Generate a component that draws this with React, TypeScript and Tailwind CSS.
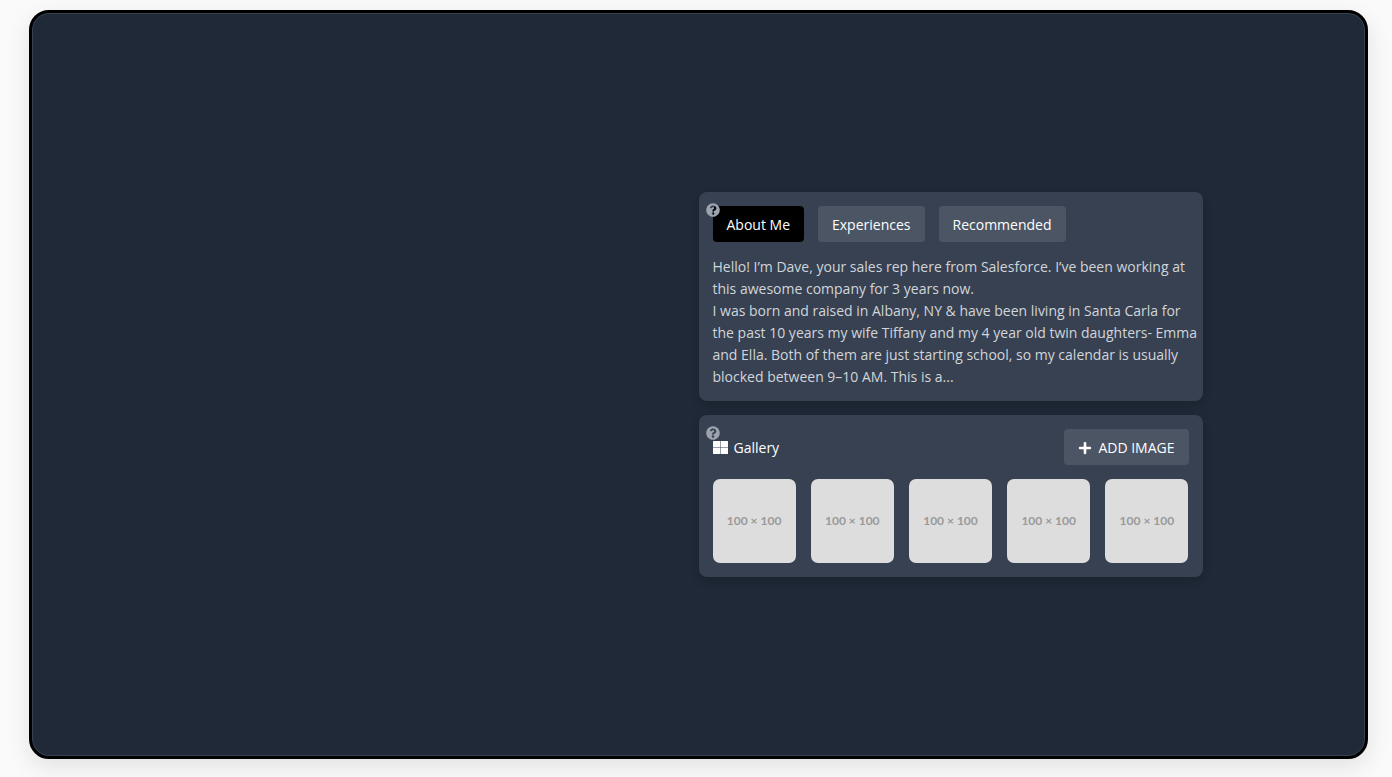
import { useState } from "react";
import type { ReactNode } from "react";
import { FaPlus, FaQuestionCircle } from "react-icons/fa";

const tabs = ["About Me", "Experiences", "Recommended"];
const images = [1, 2, 3, 4, 5];

function Card({ children, className }: { children: ReactNode; className: string }) {
  return (
    <section
      className={`relative rounded-lg bg-[#374151] px-[14px] pt-[14px] shadow-[0_4px_10px_rgba(0,0,0,0.15)] ${className}`}
    >
      <button
        type="button"
        aria-label="Help"
        className="absolute left-[7px] top-[11px] z-10 text-sm text-[#9ca3af]"
      >
        <FaQuestionCircle />
      </button>
      {children}
    </section>
  );
}

function GridIcon() {
  return (
    <svg viewBox="0 0 15 13" className="h-[13px] w-[15px]" fill="currentColor" aria-hidden="true">
      <path d="M0 .5a.5.5 0 0 1 .5-.5H7v6H0zM7.500 0h7a.5.5 0 0 1 .5.5V6H7.500zM0 6.600h7V13H.5a.5.5 0 0 1-.5-.5zM7.500 6.600H15v5.900a.5.5 0 0 1-.5.5h-7z" />
    </svg>
  );
}

export default function App() {
  const [active, setActive] = useState(tabs[0]);

  return (
    <div className="flex min-h-screen bg-[#fafafa] pb-[18px] pl-[29px] pr-6 pt-[10px] font-['Open_Sans','Noto_Sans',sans-serif] text-sm">
      <main className="grid flex-1 grid-cols-1 items-center rounded-[20px] border-[3px] border-black bg-[#1f2937] shadow-[inset_0_0_0_1px_#374151,0_8px_24px_rgba(0,0,0,0.1)] md:grid-cols-2">
        <div className="flex w-full max-w-[504px] flex-col gap-[14px] md:col-start-2">
          <Card className="pb-[13px]">
            <div role="tablist" className="mb-[14px] flex gap-[14px]">
              {tabs.map((tab) => (
                <button
                  key={tab}
                  type="button"
                  role="tab"
                  aria-selected={active === tab}
                  onClick={() => setActive(tab)}
                  className={`h-9 rounded px-[14px] pt-[2px] font-medium text-white ${
                    active === tab ? "bg-black" : "bg-[#4b5563]"
                  }`}
                >
                  {tab}
                </button>
              ))}
            </div>
            <div className="-mr-[14px] leading-[22px] text-[#d1d5db]">
              <p>
                Hello! I’m Dave, your sales rep here from Salesforce. I’ve been working at this
                awesome company for 3 years now.
              </p>
              <p>
                I was born and raised in Albany, NY &amp; have been living in Santa Carla for the
                past 10 years my wife Tiffany and my 4 year old twin daughters- Emma and Ella. Both
                of them are just starting school, so my calendar is usually blocked between 9–10 AM.
                This is a...
              </p>
            </div>
          </Card>

          <Card className="pb-[14px]">
            <div className="mb-[14px] flex items-center justify-between text-white">
              <h2 className="flex items-center gap-[6px] pt-px font-medium">
                <GridIcon />
                Gallery
              </h2>
              <button
                type="button"
                className="flex h-9 items-center gap-[6px] rounded bg-[#4b5563] px-[14px] pt-px"
              >
                <FaPlus />
                ADD IMAGE
              </button>
            </div>
            <div className="grid grid-cols-5 gap-[15px]">
              {images.map((image) => (
                <div
                  key={image}
                  className="flex aspect-square items-center justify-center rounded-[7px] bg-[#dddddd] font-['Lato',sans-serif] text-xs font-bold text-[#999999]"
                >
                  100 × 100
                </div>
              ))}
            </div>
          </Card>
        </div>
      </main>
    </div>
  );
}
